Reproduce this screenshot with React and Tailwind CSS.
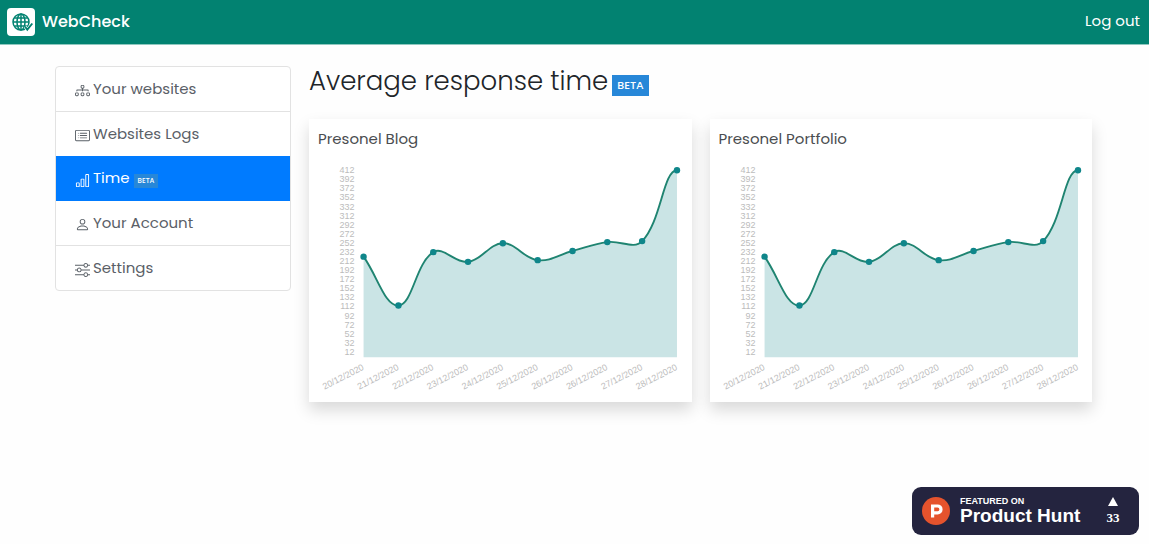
import { BsDiagram3, BsCardList, BsBarChart, BsPerson, BsSliders } from "react-icons/bs";

const POINTS = [
  { date: "20/12/2020", x: 54.5, y: 137.5 },
  { date: "21/12/2020", x: 89.3, y: 186.3 },
  { date: "22/12/2020", x: 124.1, y: 133 },
  { date: "23/12/2020", x: 158.8, y: 142.7 },
  { date: "24/12/2020", x: 193.6, y: 124.2 },
  { date: "25/12/2020", x: 228.4, y: 141 },
  { date: "26/12/2020", x: 263.2, y: 131.8 },
  { date: "26/12/2020", x: 297.9, y: 123 },
  { date: "27/12/2020", x: 332.7, y: 122 },
  { date: "28/12/2020", x: 367.5, y: 51.2 },
];
const TICKS = Array.from({ length: 21 }, (_, i) => 412 - i * 20);
const BASE = 238;
const TENSION = 0.4;

function curve(points) {
  const last = points.length - 1;
  const handles = points.map((c, i) => {
    const p = points[Math.max(i - 1, 0)];
    const q = points[Math.min(i + 1, last)];
    const before = Math.hypot(c.x - p.x, c.y - p.y);
    const after = Math.hypot(q.x - c.x, q.y - c.y);
    const a = (TENSION * before) / (before + after);
    const b = (TENSION * after) / (before + after);
    const dx = q.x - p.x;
    // the curve levels out at its final point
    const dy = i === last ? 0 : q.y - p.y;
    return { inX: c.x - a * dx, inY: c.y - a * dy, outX: c.x + b * dx, outY: c.y + b * dy };
  });
  return points.reduce((d, c, i) => {
    if (i === 0) return `M${c.x} ${c.y}`;
    const from = handles[i - 1];
    const to = handles[i];
    return `${d} C${from.outX} ${from.outY} ${to.inX} ${to.inY} ${c.x} ${c.y}`;
  }, "");
}

const LINE = curve(POINTS);
const AREA = `${LINE} V${BASE} H${POINTS[0].x} Z`;

const NAV = [
  { label: "Your websites", Icon: BsDiagram3 },
  { label: "Websites Logs", Icon: BsCardList },
  { label: "Time", Icon: BsBarChart, active: true, beta: true },
  { label: "Your Account", Icon: BsPerson },
  { label: "Settings", Icon: BsSliders },
];

function ChartCard({ title }) {
  return (
    <section className="min-w-0 flex-1 bg-white shadow-[0_8px_15px_rgba(0,0,0,0.15)]">
      <h2 className="px-[9px] pt-[9px] text-[15px] leading-[22px] font-normal text-[#4a4d50]">{title}</h2>
      <svg viewBox="0 31 382 252" className="block w-full" role="img" aria-label={`${title} response time`}>
        <path d={AREA} fill="#cae4e5" />
        <path d={LINE} fill="none" stroke="#1f8471" strokeWidth="1.9" />
        {POINTS.map((p) => (
          <circle key={p.x} cx={p.x} cy={p.y} r="3.2" fill="#0f868a" />
        ))}
        <g fill="#bcbcbc" fontSize="9" textAnchor="end" className="font-['Liberation_Sans',Arial,sans-serif]">
          {TICKS.map((t, i) => (
            <text key={t} x="45.5" y={54.2 + i * 9.07}>{t}</text>
          ))}
          {POINTS.map((p) => (
            <text key={p.x} transform={`translate(${p.x + 1} 250) rotate(-27)`}>{p.date}</text>
          ))}
        </g>
      </svg>
    </section>
  );
}

function Logo() {
  return (
    <svg viewBox="0 0 28 28" className="size-7" aria-hidden="true">
      <rect width="28" height="28" rx="4" fill="#fff" />
      <g fill="none" stroke="#028271" strokeWidth="1.5">
        <circle cx="14" cy="14" r="8" />
        <ellipse cx="14" cy="14" rx="4" ry="8" />
        <path d="M14 6v16M6 14h16M7.3 10h13.4M7.3 18h13.4" />
      </g>
      <path d="M18 18.5l2.3 3.2 5-6.2" fill="none" stroke="#fff" strokeWidth="3" />
      <path d="M18 18.5l2.3 3.2 5-6.2" fill="none" stroke="#028271" strokeWidth="1.9" />
    </svg>
  );
}

export default function App() {
  return (
    <div className="flex min-h-screen flex-col bg-[#fefefe] font-[Poppins,Inter,sans-serif]">
      <header className="flex h-11 items-center justify-between bg-[#028271] pr-[9px] pl-[7px] text-white shadow-[0_1px_0_#8fc8bf]">
        <a href="#home" className="flex items-center gap-[7px] text-[16px] font-medium">
          <Logo />
          WebCheck
        </a>
        <a href="#logout" className="pb-[2px] text-[15px]">Log out</a>
      </header>

      <div className="flex items-start gap-[18px] pt-[22px] pr-[57px] pl-[55px]">
        <nav className="w-[236px] shrink-0 overflow-hidden rounded-[4px] border border-[#e2e2e2] bg-white">
          {NAV.map(({ label, Icon, active, beta }) => (
            <a
              key={label}
              href="#nav"
              aria-current={active ? "page" : undefined}
              className={
                active
                  ? "-mx-px -mt-px flex h-[45px] items-center gap-[3px] bg-[#007bff] px-5 text-[15px] text-white"
                  : "flex h-[45px] items-center gap-[3px] border-b border-[#e2e2e2] px-[19px] text-[15px] text-[#5a6067] last:h-11 last:border-b-0"
              }
            >
              <Icon className="mt-[3px] size-[15px] shrink-0" />
              {label}
              {beta && (
                <span className="mt-1 ml-px bg-[#2787d8] px-1 py-[3px] text-[7px] leading-[8px] font-medium">BETA</span>
              )}
            </a>
          ))}
        </nav>

        <main className="min-w-0 flex-1">
          <h1 className="flex items-center gap-1 text-[26px] leading-[31px] font-light text-[#212529]">
            Average response time
            <span className="mt-2 bg-[#2787d8] px-[5px] py-[3px] text-[11px] leading-[15px] font-medium text-white">BETA</span>
          </h1>
          <div className="mt-[22px] flex gap-[18px]">
            <ChartCard title="Presonel Blog" />
            <ChartCard title="Presonel Portfolio" />
          </div>
        </main>
      </div>

      <a
        href="#product-hunt"
        className="fixed right-[10px] bottom-[9px] flex h-12 w-[227px] items-center rounded-[9px] bg-[#24243f] pr-4 pl-[10px] font-['Liberation_Sans',Arial,sans-serif] font-bold text-white"
      >
        <svg viewBox="0 0 28 28" className="size-7 shrink-0" aria-hidden="true">
          <circle cx="14" cy="14" r="14" fill="#e5532d" />
          <path d="M10.6 20.5V9h5a3.4 3.4 0 0 1 0 6.8h-5" fill="none" stroke="#fff" strokeWidth="3.2" />
        </svg>
        <span className="ml-[10px] flex flex-col">
          <span className="text-[9px] leading-[10px]">FEATURED ON</span>
          <span className="text-[19px] leading-5">Product Hunt</span>
        </span>
        <span className="ml-auto flex w-5 flex-col items-center gap-1">
          <svg viewBox="0 0 10 9" className="h-[9px] w-[10px]" aria-hidden="true">
            <path d="M5 0l5 9H0z" fill="#fff" />
          </svg>
          <span className="font-['Liberation_Serif',serif] text-[13px] leading-4">33</span>
        </span>
      </a>
    </div>
  );
}
